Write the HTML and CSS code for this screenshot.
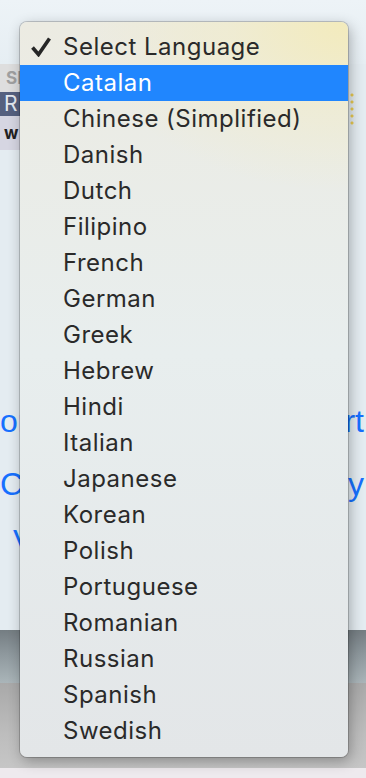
FILE: index.html
```html
<!DOCTYPE html>
<html lang="en">
<head>
	<meta charset="utf-8">
	<title>language</title>
	<link rel="stylesheet" href="styles.css">
</head>
<body>
	<div id="page">
		<div class="top"></div>
		<div class="thumb-row">
			<div class="thumb">
				<div class="thumb-a">Sl</div>
				<div class="thumb-b">R</div>
				<div class="thumb-c">w</div>
			</div>
			<div class="sparkle"></div>
		</div>
		<div class="content">
			<div class="link-row row-1">
				<a href="#">or</a>
				<a href="#" class="right">rt</a>
			</div>
			<div class="link-row row-2">
				<a href="#">C</a>
				<a href="#" class="right">cy</a>
			</div>
			<div class="link-row row-3">
				<a href="#" class="v">V</a>
			</div>
		</div>
		<div class="foot-dark"></div>
		<div class="foot-gray"></div>
		<div class="foot-light"></div>
	</div>

	<!--下拉菜单-->
	<ul id="menu">
		<li class="checked">
			<svg class="check" width="20" height="20" viewBox="0 0 20 20"><polyline points="1.5,10.5 7.5,17.5 18.5,1.5" fill="none" stroke="#262626" stroke-width="3.6" stroke-linejoin="miter"/></svg>
			Select Language
		</li>
		<li class="active">Catalan</li>
		<li>Chinese (Simplified)</li>
		<li>Danish</li>
		<li>Dutch</li>
		<li>Filipino</li>
		<li>French</li>
		<li>German</li>
		<li>Greek</li>
		<li>Hebrew</li>
		<li>Hindi</li>
		<li>Italian</li>
		<li>Japanese</li>
		<li>Korean</li>
		<li>Polish</li>
		<li>Portuguese</li>
		<li>Romanian</li>
		<li>Russian</li>
		<li>Spanish</li>
		<li>Swedish</li>
	</ul>
</body>
</html>
```
FILE: styles.css
```css
*{
	margin: 0;
	padding: 0;
	border: none;
}
body{
	width: 366px;
	height: 778px;
	overflow: hidden;
	font-family: Inter, "Liberation Sans", Arial, sans-serif;
	background: #e4ecf1;
}
#page{
	width: 366px;
	height: 778px;
	display: flex;
	flex-direction: column;
}
/*背景区*/
.top{
	height: 64px;
	background: linear-gradient(#edf3f7, #e6eef3);
}
.thumb-row{
	height: 86px;
	display: flex;
	justify-content: space-between;
}
.thumb{
	width: 60px;
	display: flex;
	flex-direction: column;
	font-weight: bold;
	overflow: hidden;
}
.thumb-a{
	height: 28px;
	background: #dedede;
	color: #a0a0a0;
	font-size: 17px;
	line-height: 28px;
	padding-left: 6px;
}
.thumb-b{
	height: 24px;
	background: #55607f;
	color: #e4e8f0;
	font-size: 21px;
	line-height: 24px;
	padding-left: 4px;
	font-weight: normal;
}
.thumb-c{
	height: 34px;
	background: #d6d6e2;
	color: #222;
	font-size: 17px;
	line-height: 34px;
	padding-left: 4px;
}
.sparkle{
	width: 16px;
	height: 34px;
	margin-top: 28px;
	background: radial-gradient(circle at 2px 3px, rgba(233,194,42,0.8) 1px, transparent 2px) 0 0 / 16px 7px;
	background-repeat: repeat-y;
}
.content{
	height: 480px;
	padding-top: 251px;
	box-sizing: border-box;
}
.link-row{
	height: 40px;
	display: flex;
	justify-content: space-between;
	font-family: "Liberation Sans", Arial, sans-serif;
	font-size: 32px;
	line-height: 40px;
}
.link-row a{
	color: #1670ff;
	text-decoration: none;
}
.link-row .right{
	padding-right: 2px;
}
.row-2{
	margin-top: 23px;
}
.row-3{
	margin-top: 17px;
}
.link-row .v{
	padding-left: 13px;
}
.foot-dark{
	height: 53px;
	background: linear-gradient(#747d82, #8e989d 45%, #aab5b9);
}
.foot-gray{
	height: 85px;
	background: linear-gradient(#a9a9a9, #bdbdbd 60%, #c6c6c6);
}
.foot-light{
	height: 10px;
	background: #eeeaee;
}
/*菜单区*/
#menu{
	position: absolute;
	left: 20px;
	top: 22px;
	width: 328px;
	height: 735px;
	box-sizing: border-box;
	padding-top: 7px;
	list-style-type: none;
	border-radius: 7px;
	background:
		radial-gradient(ellipse 260px 170px at 100% 0%, rgba(243,235,188,1) 0%, rgba(241,236,200,0.6) 45%, rgba(236,238,230,0) 100%),
		linear-gradient(#ecebe2, #e8eeee 45%, #e3e6e8);
	box-shadow: 0 0 0 1px rgba(0,0,0,0.18), 2px 4px 14px rgba(0,0,0,0.3);
}
#menu li{
	height: 36px;
	line-height: 36px;
	padding-left: 43px;
	font-size: 24px;
	letter-spacing: 0.5px;
	color: #2a2a2a;
	position: relative;
}
#menu .active{
	background: #2086fe;
	color: #fff;
}
.check{
	position: absolute;
	left: 11px;
	top: 8px;
}
```
